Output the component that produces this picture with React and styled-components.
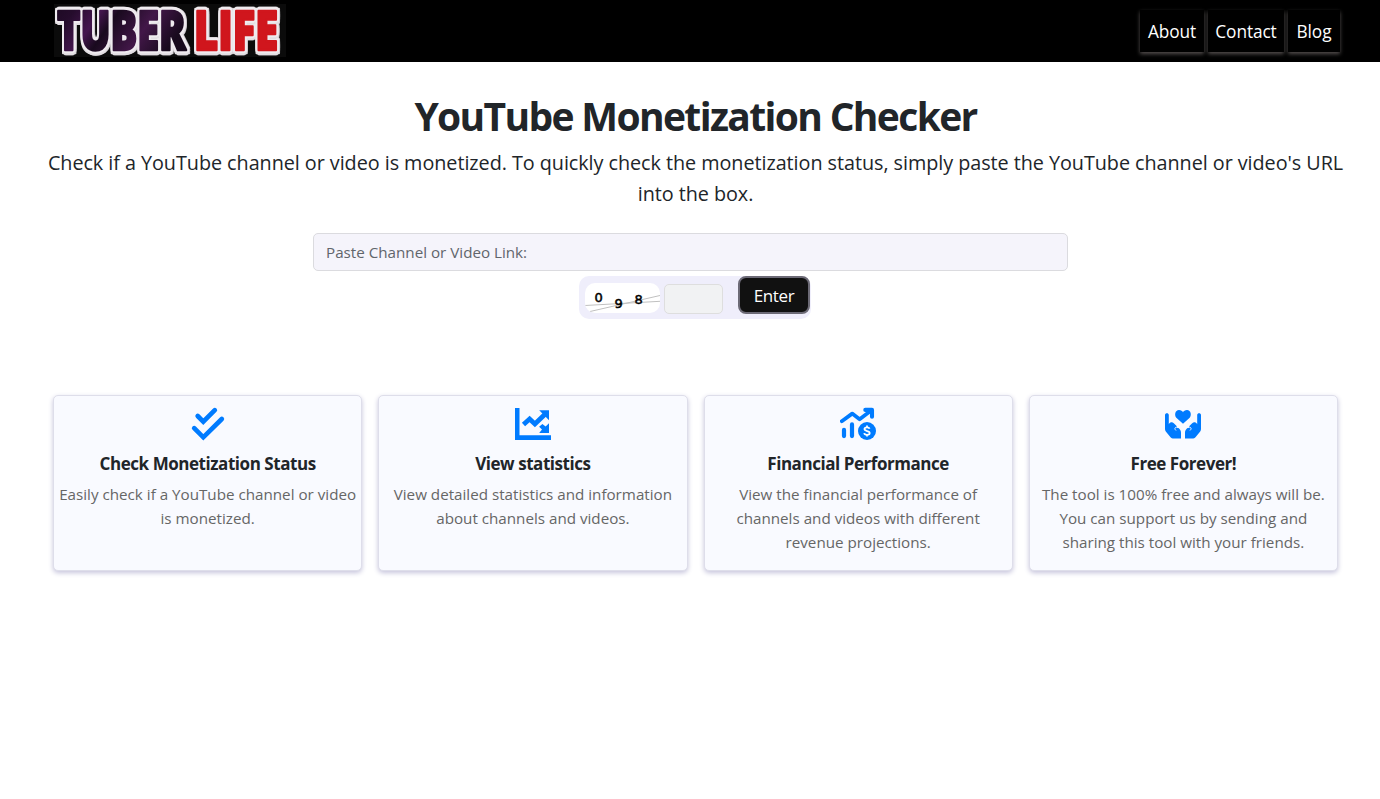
import React from 'react';
import styled, { createGlobalStyle } from 'styled-components';

const CheckIcon = () => (
    <Icon viewBox="0 0 36 36">
        <path d="M7.7 10l5.6 5.7L24.8 4.2M4.2 22.2l9.1 9.1L31.8 13" fill="none" stroke="#007bff" strokeWidth="4.7" strokeLinecap="round" />
    </Icon>
);

const StatsIcon = () => (
    <Icon viewBox="0 0 36 36">
        <path d="M0 2h4.5v27.3H36V34H0z" />
        <path d="M8.5 18.5l6.1-5.5 5.3 5 9.6-9.3" fill="none" stroke="#007bff" strokeWidth="4.8" />
        <path d="M24.2 4.3H34v10z" />
        <path d="M34 17.2v9.7h-9.8l2.8-3.4-2.9-2.8 3.3-2.6 3.2 2.5z" />
    </Icon>
);

const MoneyIcon = () => (
    <Icon viewBox="0 0 36 36">
        <path d="M1.8 15.2L12.2 7.6l7.4 5.6L30.8 4.8" fill="none" stroke="#007bff" strokeWidth="3.8" strokeLinecap="round" strokeLinejoin="round" />
        <path d="M25.3 3.9H32v6.9" fill="none" stroke="#007bff" strokeWidth="4.1" strokeLinecap="round" strokeLinejoin="round" />
        <path d="M4 23.9v6.2M12 18.4v11.7" stroke="#007bff" strokeWidth="4.2" strokeLinecap="round" />
        <circle cx="27" cy="25" r="9" />
        <path d="M29.6 22.8c-.3-1-1.3-1.5-2.6-1.500-1.5 0-2.5.7-2.5 1.8 0 2.6 5.2 1.2 5.2 3.900 0 1.200-1.100 1.900-2.700 1.900-1.500 0-2.600-.6-2.800-1.700M27 19.400v2M27 28.600v2" fill="none" stroke="#fff" strokeWidth="1.8" />
    </Icon>
);

const Hand = () => (
    <>
        <path d="M0 9c0-2.4 3.8-2.4 3.8 0v9.2c1.200-2 3.300-2.500 5-1l2.800 2.900c.6.7.5 1.300.1 1.800.9-.4 1.700-.2 2.400.6 1.300 1.300 1.900 2.500 1.900 4.200v5.700H8.800c-1.400 0-2.600-.5-3.500-1.500L.8 25.500C.2 24.700 0 23.800 0 23z" />
        <path d="M13.200 21.300c-1.900-.7-3.500.2-3.300 1.500.1.700.6 1.100 1.100 1.700" fill="none" stroke="#f9faff" strokeWidth="0.9" />
    </>
);

const HandsIcon = () => (
    <Icon viewBox="0 0 36 36">
        <path d="M18 17.8L11.3 11.7C9.2 9.500 10 4 14 4c2 0 3.300 1 4 2.200C18.700 5 20 4 22 4c4 0 4.800 5.500 2.700 7.700z" />
        <Hand />
        <g transform="matrix(-1 0 0 1 36 0)"><Hand /></g>
    </Icon>
);

const Logo = () => (
    <LogoSvg viewBox="0 0 234 62">
        <defs>
            <linearGradient id="night" x1="0" y1="0" x2="1" y2="0.4">
                <stop offset="0" stopColor="#1a0920" />
                <stop offset="0.2" stopColor="#250c2c" />
                <stop offset="0.38" stopColor="#44164e" />
                <stop offset="0.5" stopColor="#190a1e" />
                <stop offset="0.75" stopColor="#421748" />
                <stop offset="1" stopColor="#180a1d" />
            </linearGradient>
        </defs>
        <rect x="0" y="4" width="232" height="53" fill="#0b0b0b" />
        <LogoText x="3" y="50" textLength="129" lengthAdjust="spacingAndGlyphs" $color="url(#night)">TUBER</LogoText>
        <LogoText x="140" y="50" textLength="84" lengthAdjust="spacingAndGlyphs" $color="#d0161d">LIFE</LogoText>
    </LogoSvg>
);

const Captcha = () => (
    <CaptchaSvg viewBox="0 0 75 30">
        <path d="M0 22.5L75 18.3M5 28.5L75 12.5" />
        <text x="9.5" y="18.5">0</text>
        <text x="29.5" y="24.5">9</text>
        <text x="49.5" y="20.5">8</text>
    </CaptchaSvg>
);

const features = [
    { icon: <CheckIcon />, title: 'Check Monetization Status', lines: ['Easily check if a YouTube channel or video', 'is monetized.'] },
    { icon: <StatsIcon />, title: 'View statistics', lines: ['View detailed statistics and information', 'about channels and videos.'] },
    { icon: <MoneyIcon />, title: 'Financial Performance', lines: ['View the financial performance of', 'channels and videos with different', 'revenue projections.'] },
    { icon: <HandsIcon />, title: 'Free Forever!', lines: ['The tool is 100% free and always will be.', 'You can support us by sending and', 'sharing this tool with your friends.'] },
];

const App = () => {
    return (
        <>
            <GlobalStyle />
            <Navbar>
                <Logo />
                <NavList>
                    <NavLink $width={64}>About</NavLink>
                    <NavLink $width={76}>Contact</NavLink>
                    <NavLink $width={52}>Blog</NavLink>
                </NavList>
            </Navbar>
            <Main>
                <Title>YouTube Monetization Checker</Title>
                <Intro>
                    <Line>Check if a YouTube channel or video is monetized. To quickly check the monetization status, simply paste the YouTube channel or video's URL</Line>
                    <Line>into the box.</Line>
                </Intro>
                <Form onSubmit={(e) => e.preventDefault()}>
                    <LinkInput placeholder="Paste Channel or Video Link:" />
                    <CaptchaRow>
                        <Captcha />
                        <CodeInput />
                        <EnterBtn>Enter</EnterBtn>
                    </CaptchaRow>
                </Form>
                <Cards>
                    {features.map((item) => (
                        <Card key={item.title}>
                            {item.icon}
                            <CardTitle>{item.title}</CardTitle>
                            <CardText>
                                {item.lines.map((line) => <Line key={line}>{line}</Line>)}
                            </CardText>
                        </Card>
                    ))}
                </Cards>
            </Main>
        </>
    );
};

export default App;

const GlobalStyle = createGlobalStyle`
    * {
        box-sizing: border-box;
    }

    body {
        margin: 0;
        background: #fff;
        color: #212529;
        font-family: 'Open Sans', 'Noto Sans', sans-serif;
    }
`;

const Navbar = styled.nav`
    height: 62px;
    padding: 0 40px 0 54px;
    background: #000;
    display: flex;
    justify-content: space-between;
`;

const LogoSvg = styled.svg`
    width: 234px;
    height: 62px;
    overflow: visible;
`;

const LogoText = styled.text`
    font-family: 'Open Sans', sans-serif;
    font-size: 54px;
    font-weight: 800;
    fill: ${(props) => props.$color};
    stroke: ${(props) => props.$color};
    stroke-width: 2.5px;
    stroke-linejoin: round;
    filter: drop-shadow(2px 1px 0 #efebef) drop-shadow(-2px 1px 0 #efebef) drop-shadow(0 2px 0 #e2dee2) drop-shadow(0 -3px 0 #efebef) drop-shadow(1px 0 0 #cfcbcf);
`;

const NavList = styled.div`
    display: flex;
    gap: 4px;
    padding-top: 10px;
`;

const NavLink = styled.a`
    width: ${(props) => props.$width}px;
    height: 42px;
    line-height: 43px;
    text-align: center;
    color: #fff;
    font-size: 17.3px;
    letter-spacing: -0.1px;
    white-space: nowrap;
    box-shadow: 0 2px 4px #55504f;
    background: #000;
    cursor: pointer;
`;

const Main = styled.main`
    width: 1295px;
    min-height: 737px;
    margin-left: 48px;
    display: flex;
    flex-direction: column;
    align-items: center;
`;

const Title = styled.h1`
    margin: 30px 0 0;
    font-size: 39px;
    line-height: 48px;
    font-weight: 700;
    letter-spacing: -1.65px;
    white-space: nowrap;
`;

const Intro = styled.p`
    margin: 7px 0 0;
    font-size: 19.8px;
    line-height: 31px;
    letter-spacing: -0.045px;
    text-align: center;
`;

const Line = styled.span`
    display: block;
    white-space: nowrap;
`;

const Form = styled.form`
    width: 755px;
    margin: 24px 10px 0 0;
    display: flex;
    flex-direction: column;
    align-items: center;
`;

const LinkInput = styled.input`
    width: 100%;
    height: 38px;
    padding: 0 12px;
    border: 1px solid #dbdbdf;
    border-radius: 5px;
    background: #f5f4fb;
    font-family: inherit;
    font-size: 15.2px;

    &::placeholder {
        color: #61656b;
        opacity: 1;
    }
`;

const CaptchaRow = styled.div`
    width: 232px;
    height: 43px;
    margin: 5px 0 0 8px;
    padding-left: 6px;
    border-radius: 10px;
    background: #efeefb;
    display: flex;
`;

const CaptchaSvg = styled.svg`
    width: 75px;
    height: 30px;
    margin-top: 7px;
    border-radius: 10px;
    background: #fff;
    font: 13px 'DejaVu Sans', sans-serif;

    text {
        stroke: #000;
        stroke-width: 0.5px;
    }

    path {
        stroke: #c0c0c0;
        fill: none;
    }
`;

const CodeInput = styled.input`
    width: 59px;
    height: 30px;
    margin: 8px 0 0 4px;
    border: 1px solid #dedede;
    border-radius: 5px;
    background: #f1f2f3;
`;

const EnterBtn = styled.button`
    width: 72px;
    height: 38px;
    margin-left: 15px;
    padding: 0 0 0 1px;
    border: 2px solid #6c6a76;
    border-radius: 8px;
    background: #111;
    color: #fff;
    font-family: inherit;
    font-size: 17px;
    letter-spacing: -0.4px;
    cursor: pointer;
`;

const Cards = styled.section`
    width: 1285px;
    margin-top: 76px;
    display: grid;
    grid-template-columns: repeat(4, 1fr);
    gap: 16px;
`;

const Card = styled.article`
    height: 176px;
    padding-top: 10px;
    border: 1px solid #dedeea;
    border-radius: 5px;
    background: #f9faff;
    box-shadow: 0 2px 5px #c6c4dc;
    display: flex;
    flex-direction: column;
    align-items: center;
`;

const Icon = styled.svg`
    width: 36px;
    height: 36px;
    fill: #007bff;
`;

const CardTitle = styled.h2`
    margin: 11px 0 0;
    font-size: 17px;
    line-height: 22px;
    font-weight: 700;
    letter-spacing: -0.45px;
`;

const CardText = styled.p`
    margin: 7px 0 0;
    color: #666;
    font-size: 15.2px;
    line-height: 24px;
    text-align: center;
`;
